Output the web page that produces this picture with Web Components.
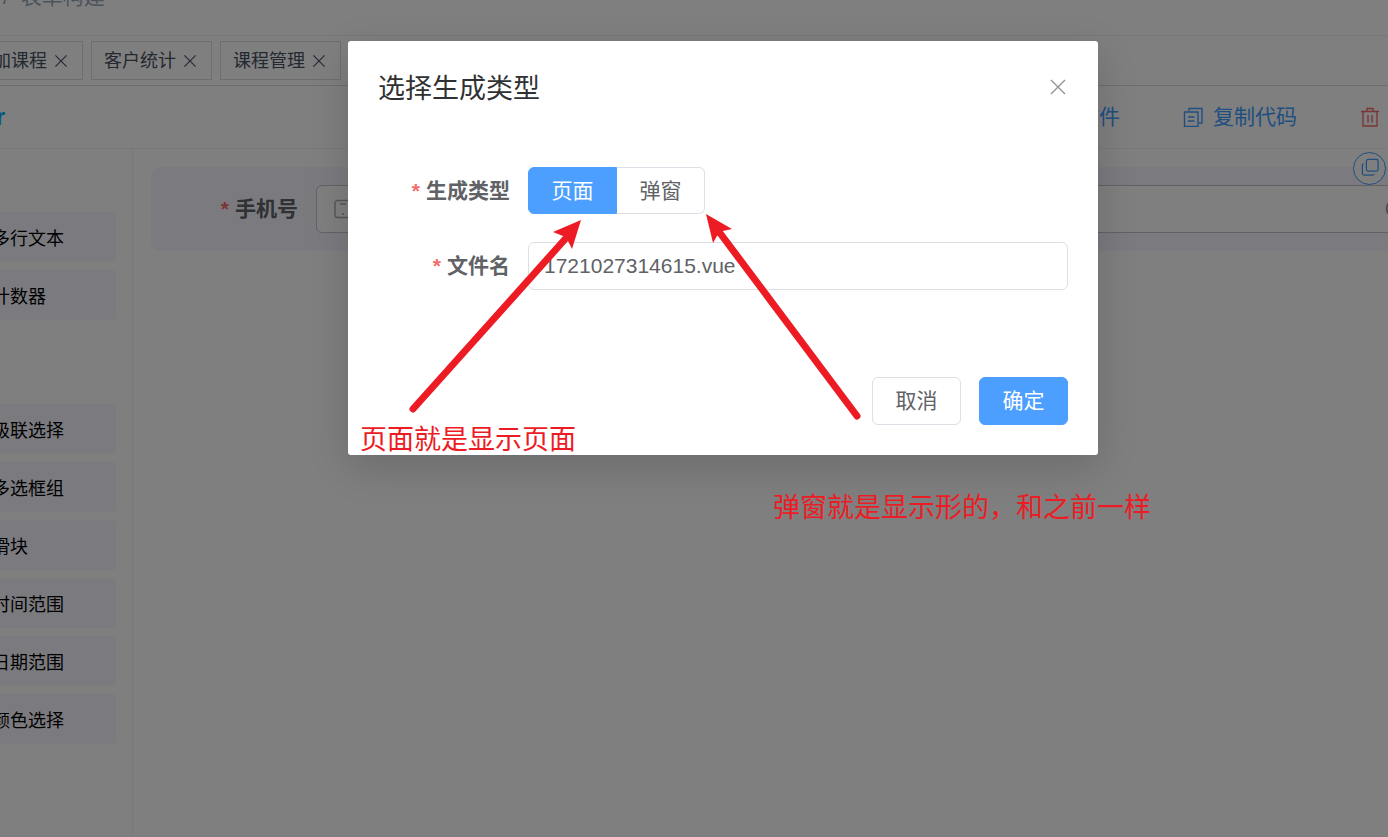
<!DOCTYPE html>
<html lang="zh-CN">
<head>
<meta charset="utf-8">
<title>表单构建</title>
<style>
  html, body {
    height: 100%;
    margin: 0;
    overflow: hidden;
  }
  body {
    font-family: "Liberation Sans", "Noto Sans CJK SC", sans-serif;
    font-size: 21px;
    line-height: 24px;
    color: #606266;
    background: #fff;
  }
</style>
</head>
<body>
<form-generator></form-generator>

<script>
const icons = {
  close: '<path d="M3 3 17 17M17 3 3 17"/>',
  copy: '<path d="M6 4V1.500h13V16h-3M1.500 5H15v14.500H1.500zM5 10h6.500M5 14h6.500"/>',
  clone: '<rect x="6" y="1.500" width="13" height="13" rx="2"/><path d="M3 6.500Q1.500 6.500 1.500 8.500V17Q1.500 19 3.500 19H12.500Q14.500 19 14.500 17.500"/>',
  trash: '<path d="M1 4.500h18M3 4.500V19h14V4.500M7 4V1.500h6V4M8 8v7.500M12 8v7.500"/>',
  phone: '<rect x="2" y="1.500" width="16" height="17" rx="2.500"/><path d="M7 5h6M9 15h2"/>'
}

const define = (name, template, setup) => {
  window.customElements.define(name, class extends HTMLElement {
    constructor() {
      super()
      this.attachShadow({ mode: 'open' })
    }

    connectedCallback() {
      this.shadowRoot.innerHTML = typeof template === 'function' ? template(this) : template
      if (setup) {
        setup(this, this.shadowRoot)
      }
    }
  })
}

define('fg-icon', host => `
  <style>
    :host { display: inline-flex; flex: none; width: 20px; height: 20px; }
    svg {
      width: 100%;
      height: 100%;
      fill: none;
      stroke: currentColor;
      stroke-width: 1.400;
    }
  </style>
  <svg viewBox="0 0 20 20" aria-hidden="true">${icons[host.getAttribute('name')]}</svg>`)

define('fg-tag', `
  <style>
    :host {
      display: flex;
      flex: none;
      box-sizing: border-box;
      width: 121px;
      height: 39px;
      padding: 0 12px;
      align-items: center;
      gap: 6px;
      border: 1px solid #d8dce5;
      font-size: 18px;
      color: #495060;
    }
    a { color: inherit; text-decoration: none; white-space: nowrap; }
    button { display: flex; padding: 0; border: 0; background: none; color: inherit; }
    fg-icon { width: 16px; height: 16px; }
  </style>
  <a href="#"><slot></slot></a>
  <button type="button" aria-label="关闭"><fg-icon name="close"></fg-icon></button>`)

define('fg-button', host => `
  <style>
    :host { display: inline-flex; }
    button {
      box-sizing: border-box;
      width: 89px;
      height: 48px;
      padding: 0;
      border: 1px solid #dcdfe6;
      border-radius: 6px;
      font: inherit;
      color: #606266;
      background: #fff;
    }
    :host([type=primary]) button { color: #fff; border-color: #4c9eff; background: #4c9eff; }
    :host([type=text]) button {
      display: flex;
      width: auto;
      align-items: center;
      gap: 10px;
      border: 0;
      color: #409eff;
      background: none;
      white-space: nowrap;
    }
    :host([danger]) button { color: #f56c6c; }
  </style>
  <button type="button">
    ${host.hasAttribute('icon') ? `<fg-icon name="${host.getAttribute('icon')}"></fg-icon>` : ''}
    <slot></slot>
  </button>`)

define('fg-component', `
  <style>
    :host {
      display: flex;
      height: 50px;
      padding-left: 40px;
      align-items: center;
      border-radius: 4px;
      font-size: 18px;
      line-height: normal;
      color: #000;
      background: #f6f7ff;
    }
  </style>
  <slot></slot>`)

define('fg-sidebar', `
  <style>
    :host {
      display: flex;
      flex: none;
      box-sizing: border-box;
      width: 181px;
      padding: 63px 16px 0 0;
      flex-direction: column;
      gap: 84px;
      border-right: 1px solid #f1f1ff;
    }
    section { display: grid; gap: 8px; }
  </style>
  <section>
    <fg-component>多行文本</fg-component>
    <fg-component>计数器</fg-component>
  </section>
  <section>
    <fg-component>级联选择</fg-component>
    <fg-component>多选框组</fg-component>
    <fg-component>滑块</fg-component>
    <fg-component>时间范围</fg-component>
    <fg-component>日期范围</fg-component>
    <fg-component>颜色选择</fg-component>
  </section>`)

define('fg-form-item', `
  <style>
    :host { display: flex; align-items: center; }
    .label {
      box-sizing: border-box;
      flex: none;
      width: var(--label-width, 120px);
      padding-right: 18px;
      text-align: right;
      font-weight: 700;
      white-space: nowrap;
    }
    .label::before { content: '*'; margin-right: 6px; color: #f56c6c; }
    .content { display: flex; flex: 1; }
  </style>
  <div class="label"><slot name="label"></slot></div>
  <div class="content"><slot></slot></div>`)

define('fg-canvas', `
  <style>
    :host { display: block; flex: 1; padding: 18px; }
    .row {
      position: relative;
      padding: 18px 0 18px 18px;
      border-radius: 9px;
      background: #f6f7ff;
    }
    fg-form-item { --label-width: 147px; }
    .field {
      display: flex;
      box-sizing: border-box;
      flex: 1;
      height: 48px;
      padding: 0 8px 0 16px;
      align-items: center;
      gap: 12px;
      border: 1px solid #c0c4cc;
      border-radius: 6px;
      background: #fff;
      color: #a8abb2;
    }
    input { flex: 1; border: 0; padding: 0; font: inherit; background: none; outline: 0; }
    .count { font-size: 18px; color: #909399; }
    .copy {
      position: absolute;
      top: -15px;
      right: 42px;
      display: flex;
      width: 33px;
      height: 33px;
      padding: 0 0 4px;
      align-items: center;
      justify-content: center;
      box-sizing: border-box;
      border: 1px solid #409eff;
      border-radius: 50%;
      color: #409eff;
      background: #fff;
    }
    .copy fg-icon { width: 18px; height: 18px; }
  </style>
  <div class="row">
    <fg-form-item>
      <label slot="label" for="mobile">手机号</label>
      <div class="field">
        <fg-icon name="phone"></fg-icon>
        <input id="mobile" type="text">
        <span class="count">0/11</span>
      </div>
    </fg-form-item>
    <button class="copy" type="button" aria-label="复制"><fg-icon name="clone"></fg-icon></button>
  </div>`)

define('fg-dialog', `
  <style>
    :host {
      position: absolute;
      inset: 0 -58px 0 0;
      display: flex;
      align-items: flex-start;
      justify-content: center;
      padding-top: 41px;
      background: rgba(0, 0, 0, .5);
    }
    .dialog {
      box-sizing: border-box;
      width: 750px;
      padding: 30px;
      border-radius: 3px;
      background: #fff;
      box-shadow: 0 12px 40px rgba(0, 0, 0, .16);
    }
    header {
      display: flex;
      height: 36px;
      align-items: center;
      justify-content: space-between;
      font-size: 27px;
      color: #303133;
    }
    .close {
      display: flex;
      height: 32px;
      padding: 0;
      align-items: center;
      align-self: flex-start;
      border: 0;
      color: #909399;
      background: none;
    }
    .body { padding: 60px 0 87px 30px; }
    footer { display: flex; justify-content: flex-end; gap: 18px; }
  </style>
  <div class="dialog" role="dialog" aria-modal="true">
    <header>
      <slot name="title"></slot>
      <button class="close" type="button" aria-label="关闭"><fg-icon name="close"></fg-icon></button>
    </header>
    <div class="body"><slot></slot></div>
    <footer><slot name="footer"></slot></footer>
  </div>`, (host, root) => {
  root.querySelector('.close').addEventListener('click', () => host.remove())
})

define('fg-type-form', `
  <style>
    :host { display: grid; gap: 28px; }
    .group { display: flex; }
    .group label {
      display: flex;
      box-sizing: border-box;
      position: relative;
      width: 89px;
      height: 47px;
      align-items: center;
      justify-content: center;
      border: 1px solid #dcdfe6;
    }
    .group label:first-child { border-radius: 6px 0 0 6px; }
    .group label:last-child { width: 88px; border-left: 0; border-radius: 0 6px 6px 0; }
    .group label:has(:checked) { color: #fff; border-color: #4c9eff; background: #4c9eff; }
    .group input { position: absolute; inset: 0; margin: 0; opacity: 0; }
    .text {
      box-sizing: border-box;
      width: 100%;
      height: 48px;
      padding: 0 15px;
      border: 1px solid #dcdfe6;
      border-radius: 6px;
      font: inherit;
      color: #606266;
      background: #fff;
    }
  </style>
  <fg-form-item>
    <span slot="label" id="type-label">生成类型</span>
    <div class="group" role="radiogroup" aria-labelledby="type-label">
      <label><input type="radio" name="type" value="file" checked>页面</label>
      <label><input type="radio" name="type" value="dialog">弹窗</label>
    </div>
  </fg-form-item>
  <fg-form-item>
    <label slot="label" for="file-name">文件名</label>
    <input class="text" id="file-name" type="text" value="1721027314615.vue">
  </fg-form-item>`)

// Red arrows and notes drawn freely over the page
define('fg-notes', `
  <style>
    :host { position: absolute; inset: 0; pointer-events: none; color: #ed1c24; }
    svg { position: absolute; width: 100%; height: 100%; }
    line { stroke: currentColor; stroke-width: 7; stroke-linecap: round; }
    path { fill: currentColor; }
    p { position: absolute; margin: 0; font-size: 27px; line-height: 36px; white-space: nowrap; }
    .page { left: 360px; top: 422px; }
    .popup { left: 773px; top: 490px; }
  </style>
  <svg aria-hidden="true">
    <line x1="413" y1="409" x2="567" y2="237"/>
    <path d="M581 220 553 232 563 236 568 241 572 249z"/>
    <line x1="857" y1="416" x2="720" y2="233"/>
    <path d="M706 214 732 229 723 231 717 236 713 243z"/>
  </svg>
  <p class="page">页面就是显示页面</p>
  <p class="popup">弹窗就是显示形的，和之前一样</p>`)

define('form-generator', `
  <style>
    :host { display: block; position: relative; height: 100%; overflow: hidden; }
    .shell {
      display: flex;
      height: calc(100% + 39px);
      margin: -39px -58px 0 -48px;
      flex-direction: column;
    }
    .breadcrumb {
      display: flex;
      box-sizing: border-box;
      height: 75px;
      flex: none;
      padding: 0 0 2px 51px;
      align-items: center;
      gap: 12px;
      border-bottom: 1px solid #f0f0f0;
      color: #97a8be;
    }
    .tags {
      display: flex;
      box-sizing: border-box;
      height: 50px;
      flex: none;
      padding: 5px 10px;
      gap: 8px;
      border-bottom: 1px solid #d8dce5;
    }
    .toolbar {
      display: flex;
      box-sizing: border-box;
      height: 63px;
      flex: none;
      padding-right: 14px;
      align-items: center;
      justify-content: space-between;
      border-bottom: 1px solid #f1f1ff;
    }
    .logo {
      display: flex;
      width: 53px;
      justify-content: flex-end;
      font-size: 24px;
      font-weight: 700;
      color: #00afff;
    }
    .actions { display: flex; gap: 63px; }
    .main { display: flex; flex: 1; }
  </style>
  <div class="shell">
    <nav class="breadcrumb"><span>/</span><span>表单构建</span></nav>
    <nav class="tags">
      <fg-tag>添加课程</fg-tag>
      <fg-tag>客户统计</fg-tag>
      <fg-tag>课程管理</fg-tag>
    </nav>
    <div class="toolbar">
      <div class="logo">Generator</div>
      <div class="actions">
        <fg-button type="text">导出vue文件</fg-button>
        <fg-button type="text" icon="copy">复制代码</fg-button>
        <fg-button type="text" icon="trash" danger>清空</fg-button>
      </div>
    </div>
    <div class="main">
      <fg-sidebar></fg-sidebar>
      <fg-canvas></fg-canvas>
    </div>
  </div>
  <fg-dialog>
    <span slot="title">选择生成类型</span>
    <fg-type-form></fg-type-form>
    <fg-button slot="footer">取消</fg-button>
    <fg-button slot="footer" type="primary">确定</fg-button>
  </fg-dialog>
  <fg-notes></fg-notes>`)
</script>
</body>
</html>
